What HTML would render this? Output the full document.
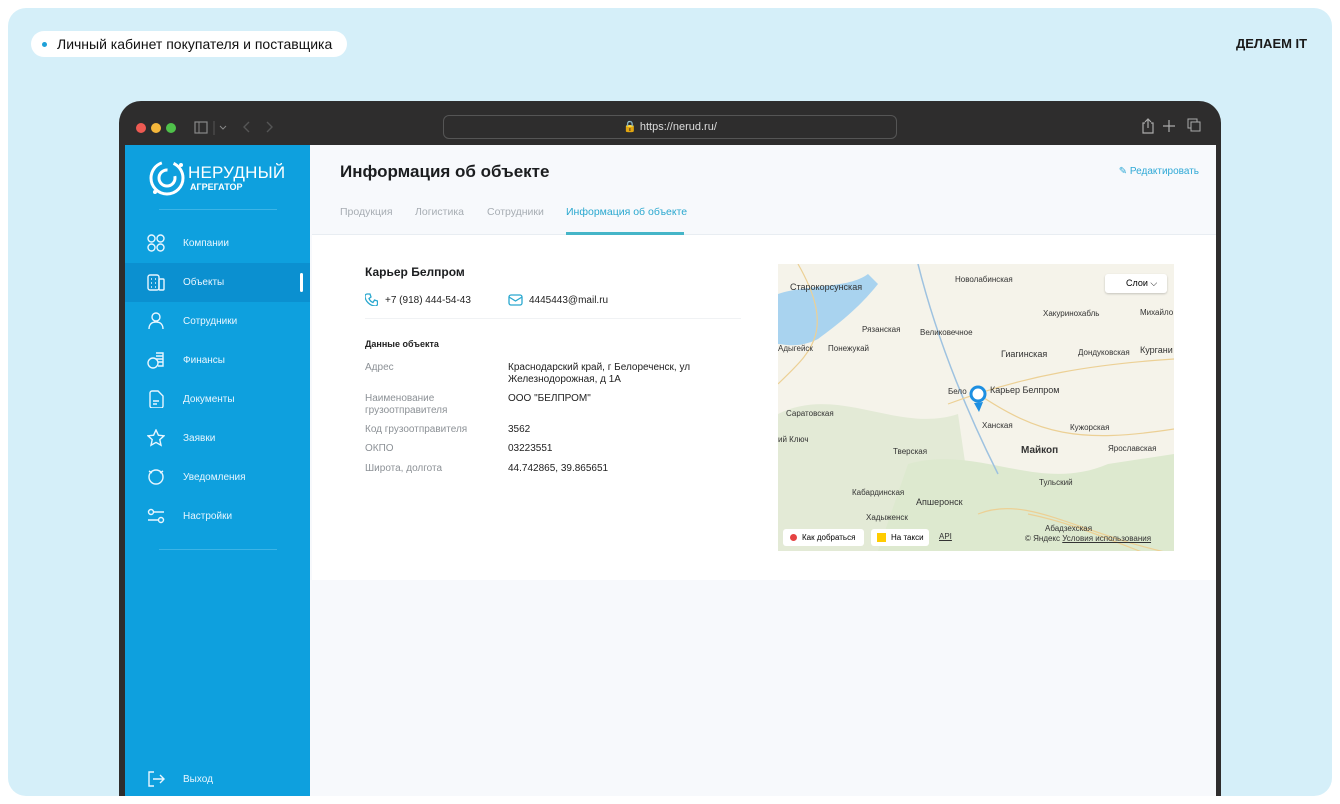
<!DOCTYPE html>
<html><head><meta charset="utf-8">
<style>
*{margin:0;padding:0;box-sizing:border-box}
body{width:1340px;height:804px;background:#fff;font-family:"Liberation Sans","Noto Sans CJK SC",sans-serif;position:relative;overflow:hidden}
.bg{position:absolute;left:8px;top:8px;width:1324px;height:788px;background:#d5eff9;border-radius:18px;overflow:hidden}
.pill{position:absolute;left:31px;top:31px;height:26px;width:316px;background:#fff;border-radius:13px;font-size:14px;color:#111;line-height:26px;padding-left:26px}
.pill:before{content:"";position:absolute;left:11px;top:11px;width:5px;height:5px;border-radius:50%;background:#1ea0d8}
.brand{position:absolute;left:1236px;top:36px;font-weight:bold;font-size:13px;color:#1a1a1a}
.dev{position:absolute;left:111px;top:93px;width:1102px;height:720px;background:#2e2d2d;border-radius:22px 22px 0 0}
.dot{position:absolute;top:22px;width:10px;height:10px;border-radius:50%}
.url{position:absolute;left:324px;top:14px;width:454px;height:24px;border:1px solid #555;border-radius:6px;color:#ddd;font-size:11px;text-align:center;line-height:22px}
.screen{position:absolute;left:117px;top:137px;width:1091px;height:660px;background:#f7f9fc}
.side{position:absolute;left:0;top:0;width:185px;height:660px;background:#0ea0de}
.nav{position:absolute;left:0;width:185px;height:39px;color:#e8f6ff;font-size:10px;line-height:39px;padding-left:58px}
.nav svg{position:absolute;left:22px;top:10px}
.nav.act{background:#0b90d0}
.nav.act:after{content:"";position:absolute;right:7px;top:10px;width:3px;height:19px;background:#fff;border-radius:2px}
.hdr{position:absolute;left:187px;top:0;width:904px;height:90px;background:#f7f9fc;border-bottom:1px solid #e8edf2}
.card{position:absolute;left:187px;top:90px;width:904px;height:345px;background:#fff}
.tab{position:absolute;top:61px;font-size:10.5px;color:#a7adb3}
.lab{position:absolute;left:53px;font-size:10px;color:#8c9196;line-height:12px}
.val{position:absolute;left:196px;font-size:10px;color:#222;line-height:12px}
.map{position:absolute;left:466px;top:29px;width:396px;height:287px;background:#f5f3ea;overflow:hidden}
.m{position:absolute;font-size:8px;color:#333;white-space:nowrap}
</style></head><body>
<div class="bg">
<div class="pill" style="left:23px;top:23px">Личный кабинет покупателя и поставщика</div>
<div class="brand" style="left:1228px;top:28px">ДЕЛАЕМ IT</div>
<div class="dev">
 <div class="dot" style="left:17px;background:#ee5a52"></div>
 <div class="dot" style="left:32px;background:#f4b73b"></div>
 <div class="dot" style="left:47px;background:#4fc14a"></div>
 <svg style="position:absolute;left:75px;top:20px" width="40" height="14"><rect x="1" y="1" width="12" height="11" fill="none" stroke="#888" stroke-width="1.2"/><line x1="5" y1="1" x2="5" y2="12" stroke="#888"/><line x1="20" y1="0" x2="20" y2="14" stroke="#555"/><path d="M26 5l3 3 3-3" stroke="#888" fill="none"/></svg>
 <svg style="position:absolute;left:122px;top:19px" width="40" height="14"><path d="M8 2l-5 5 5 5M26 2l5 5-5 5" stroke="#555" fill="none" stroke-width="1.4"/></svg>
 <div class="url">🔒 https://nerud.ru/</div>
 <svg style="position:absolute;left:1022px;top:16px" width="64" height="18"><path d="M4 6h-2v10h10v-10h-2M7 2v9M4 5l3-3 3 3" stroke="#aaa" fill="none" stroke-width="1.2"/><path d="M28 3v12M22 9h12" stroke="#aaa" stroke-width="1.2"/><rect x="47" y="2" width="9" height="9" fill="none" stroke="#aaa"/><rect x="50" y="5" width="9" height="9" fill="#2e2d2d" stroke="#aaa"/></svg>
</div>
<div class="screen">
 <div class="side">
  <svg style="position:absolute;left:22px;top:13px" width="40" height="40"><circle cx="20" cy="20" r="16" fill="none" stroke="#fff" stroke-width="3" stroke-dasharray="70 12"/><circle cx="20" cy="20" r="8" fill="none" stroke="#fff" stroke-width="3" stroke-dasharray="38 10"/><circle cx="8" cy="34" r="2" fill="#fff"/><circle cx="34" cy="7" r="2" fill="#fff"/></svg>
  <div style="position:absolute;left:63px;top:18px;color:#fff;font-size:17px;letter-spacing:0.2px">НЕРУДНЫЙ</div>
  <div style="position:absolute;left:65px;top:37px;color:#fff;font-size:9px;font-weight:bold">АГРЕГАТОР</div>
  <div style="position:absolute;left:34px;top:64px;width:118px;height:1px;background:#3cb4e6"></div>
  <div class="nav" style="top:79px"><svg width="18" height="18" fill="none" stroke="#e8f6ff" stroke-width="1.4"><circle cx="4.5" cy="4.5" r="3.5"/><circle cx="13.5" cy="4.5" r="3.5"/><circle cx="4.5" cy="13.5" r="3.5"/><circle cx="13.5" cy="13.5" r="3.5"/></svg>Компании</div>
  <div class="nav act" style="top:118px"><svg width="18" height="18" fill="none" stroke="#e8f6ff" stroke-width="1.4"><rect x="1" y="2" width="11" height="15" rx="2"/><rect x="12" y="6" width="5" height="11" rx="1"/><path d="M4 6h1M8 6h1M4 10h1M8 10h1M4 14h1M8 14h1"/></svg>Объекты</div>
  <div class="nav" style="top:157px"><svg width="18" height="18" fill="none" stroke="#e8f6ff" stroke-width="1.4"><circle cx="9" cy="5" r="4"/><path d="M2 17c0-5 3-7 7-7s7 2 7 7"/></svg>Сотрудники</div>
  <div class="nav" style="top:196px"><svg width="18" height="18" fill="none" stroke="#e8f6ff" stroke-width="1.4"><circle cx="6" cy="12" r="5"/><path d="M9 2h7v13h-5M9 5h7M9 8h7M11 11h5"/></svg>Финансы</div>
  <div class="nav" style="top:235px"><svg width="18" height="18" fill="none" stroke="#e8f6ff" stroke-width="1.4"><path d="M3 3a2 2 0 012-2h6l5 5v10a2 2 0 01-2 2H5a2 2 0 01-2-2z"/><path d="M6 11h6M6 14h4"/></svg>Документы</div>
  <div class="nav" style="top:274px"><svg width="18" height="18" fill="none" stroke="#e8f6ff" stroke-width="1.4"><path d="M9 1l2.4 5.2 5.6.6-4.2 3.8 1.2 5.6L9 13.4 4 16.2l1.2-5.6L1 6.8l5.6-.6z"/></svg>Заявки</div>
  <div class="nav" style="top:313px"><svg width="18" height="18" fill="none" stroke="#e8f6ff" stroke-width="1.4"><circle cx="9" cy="9" r="7"/><path d="M2 3l3 2M16 3l-3 2"/></svg>Уведомления</div>
  <div class="nav" style="top:352px"><svg width="18" height="18" fill="none" stroke="#e8f6ff" stroke-width="1.4"><circle cx="4" cy="5" r="2.5"/><path d="M7 5h10M1 13h10"/><circle cx="14" cy="13" r="2.5"/></svg>Настройки</div>
  <div style="position:absolute;left:34px;top:404px;width:118px;height:1px;background:#3cb4e6"></div>
  <div class="nav" style="top:615px"><svg width="18" height="18" fill="none" stroke="#e8f6ff" stroke-width="1.4"><path d="M7 2H2v14h5M6 9h11M13 5l4 4-4 4"/></svg>Выход</div>
 </div>
 <div class="hdr">
  <div style="position:absolute;left:28px;top:17px;font-size:17px;font-weight:bold;color:#1b1d1f">Информация об объекте</div>
  <div style="position:absolute;right:17px;top:21px;font-size:10px;color:#2fa9d6">✎ Редактировать</div>
  <div class="tab" style="left:28px">Продукция</div>
  <div class="tab" style="left:103px">Логистика</div>
  <div class="tab" style="left:175px">Сотрудники</div>
  <div class="tab" style="left:254px;color:#2aa8cf">Информация об объекте</div>
  <div style="position:absolute;left:254px;top:87px;width:118px;height:3px;background:#45b5c8"></div>
 </div>
 <div class="card">
  <div style="position:absolute;left:53px;top:30px;font-size:12px;font-weight:bold;color:#1b1d1f">Карьер Белпром</div>
  <svg style="position:absolute;left:53px;top:58px" width="13" height="13" fill="none" stroke="#2aa8cf" stroke-width="1.3"><path d="M2 1h3l1 3-2 1.5a7 7 0 004 4L9.5 7l3 1v3c0 1-1 2-2 2C5 13 0 8 0 3c0-1 1-2 2-2z"/></svg>
  <div class="val" style="left:73px;top:60px">+7 (918) 444-54-43</div>
  <svg style="position:absolute;left:196px;top:59px" width="15" height="12" fill="none" stroke="#2aa8cf" stroke-width="1.3"><rect x="1" y="1" width="13" height="10" rx="2"/><path d="M1 3l6.5 4L14 3"/></svg>
  <div class="val" style="left:217px;top:60px">4445443@mail.ru</div>
  <div style="position:absolute;left:53px;top:83px;width:376px;height:1px;background:#f0f2f4"></div>
  <div style="position:absolute;left:53px;top:104px;font-size:9px;font-weight:bold;color:#222">Данные объекта</div>
  <div class="lab" style="top:127px">Адрес</div>
  <div class="val" style="top:127px">Краснодарский край, г Белореченск, ул<br>Железнодорожная, д 1А</div>
  <div class="lab" style="top:158px">Наименование<br>грузоотправителя</div>
  <div class="val" style="top:158px">ООО "БЕЛПРОМ"</div>
  <div class="lab" style="top:189px">Код грузоотправителя</div>
  <div class="val" style="top:189px">3562</div>
  <div class="lab" style="top:208px">ОКПО</div>
  <div class="val" style="top:208px">03223551</div>
  <div class="lab" style="top:228px">Широта, долгота</div>
  <div class="val" style="top:228px">44.742865, 39.865651</div>
  <div class="map">
   <svg width="396" height="287" style="position:absolute;left:0;top:0">
    <path d="M0 150 C60 120 120 170 180 150 L200 287 L0 287Z" fill="#e3ead6"/>
    <path d="M130 200 C200 180 260 230 330 200 L396 190 L396 287 L100 287Z" fill="#dde9cf"/>
    <path d="M0 30 C30 20 70 25 90 10 L100 20 C80 45 60 60 40 75 C20 85 5 80 0 80Z" fill="#a9d3ef"/>
    <path d="M140 0 C160 80 190 150 220 210 260 270" stroke="#9ec2e0" fill="none" stroke-width="1.5"/>
    <path d="M0 120 C30 90 60 70 20 0 M170 140 C250 110 320 100 396 95 M200 250 C250 230 300 270 396 290 M250 250 C300 260 340 280 396 300 M200 130 C260 170 300 180 396 165" stroke="#ecd095" fill="none" stroke-width="1.2"/>
    <circle cx="200" cy="130" r="7" fill="#fff" stroke="#1d8fe1" stroke-width="3"/><path d="M196 139 L201 148 L205 138" fill="#1d8fe1"/>
   </svg>
   <div class="m" style="left:12px;top:18px;font-size:9px">Старокорсунская</div>
   <div class="m" style="left:177px;top:11px">Новолабинская</div>
   <div class="m" style="left:84px;top:61px">Рязанская</div>
   <div class="m" style="left:142px;top:64px">Великовечное</div>
   <div class="m" style="left:0;top:80px">Адыгейск</div>
   <div class="m" style="left:50px;top:80px">Понежукай</div>
   <div class="m" style="left:223px;top:85px;font-size:9px">Гиагинская</div>
   <div class="m" style="left:300px;top:84px">Дондуковская</div>
   <div class="m" style="left:362px;top:81px;font-size:9px">Кургани</div>
   <div class="m" style="left:265px;top:45px">Хакуринохабль</div>
   <div class="m" style="left:362px;top:44px">Михайло</div>
   <div class="m" style="left:212px;top:121px;font-size:9px">Карьер Белпром</div>
   <div class="m" style="left:170px;top:123px">Бело</div>
   <div class="m" style="left:8px;top:145px">Саратовская</div>
   <div class="m" style="left:204px;top:157px">Ханская</div>
   <div class="m" style="left:292px;top:159px">Кужорская</div>
   <div class="m" style="left:0;top:171px">ий Ключ</div>
   <div class="m" style="left:243px;top:181px;font-size:10px;font-weight:bold">Майкоп</div>
   <div class="m" style="left:330px;top:180px">Ярославская</div>
   <div class="m" style="left:115px;top:183px">Тверская</div>
   <div class="m" style="left:261px;top:214px">Тульский</div>
   <div class="m" style="left:74px;top:224px">Кабардинская</div>
   <div class="m" style="left:138px;top:233px;font-size:9px">Апшеронск</div>
   <div class="m" style="left:88px;top:249px">Хадыженск</div>
   <div class="m" style="left:267px;top:260px">Абадзехская</div>
   <div style="position:absolute;left:327px;top:10px;width:62px;height:19px;background:#fff;border-radius:3px;box-shadow:0 1px 2px rgba(0,0,0,.2);font-size:9px;line-height:19px;padding-left:21px">Слои ⌵</div>
   <div style="position:absolute;left:5px;top:265px;width:81px;height:17px;background:#fff;border-radius:3px;font-size:8px;line-height:17px;padding-left:19px"><span style="position:absolute;left:7px;top:5px;width:7px;height:7px;border-radius:50%;background:#e54242"></span>Как добраться</div>
   <div style="position:absolute;left:93px;top:265px;width:58px;height:17px;background:#fff;border-radius:3px;font-size:8px;line-height:17px;padding-left:20px"><span style="position:absolute;left:6px;top:4px;width:9px;height:9px;background:#fc0"></span>На такси</div>
   <div class="m" style="left:161px;top:268px;text-decoration:underline">API</div>
   <div class="m" style="left:247px;top:270px">© Яндекс <u>Условия использования</u></div>
  </div>
 </div>
</div>
</div>
</body></html>
